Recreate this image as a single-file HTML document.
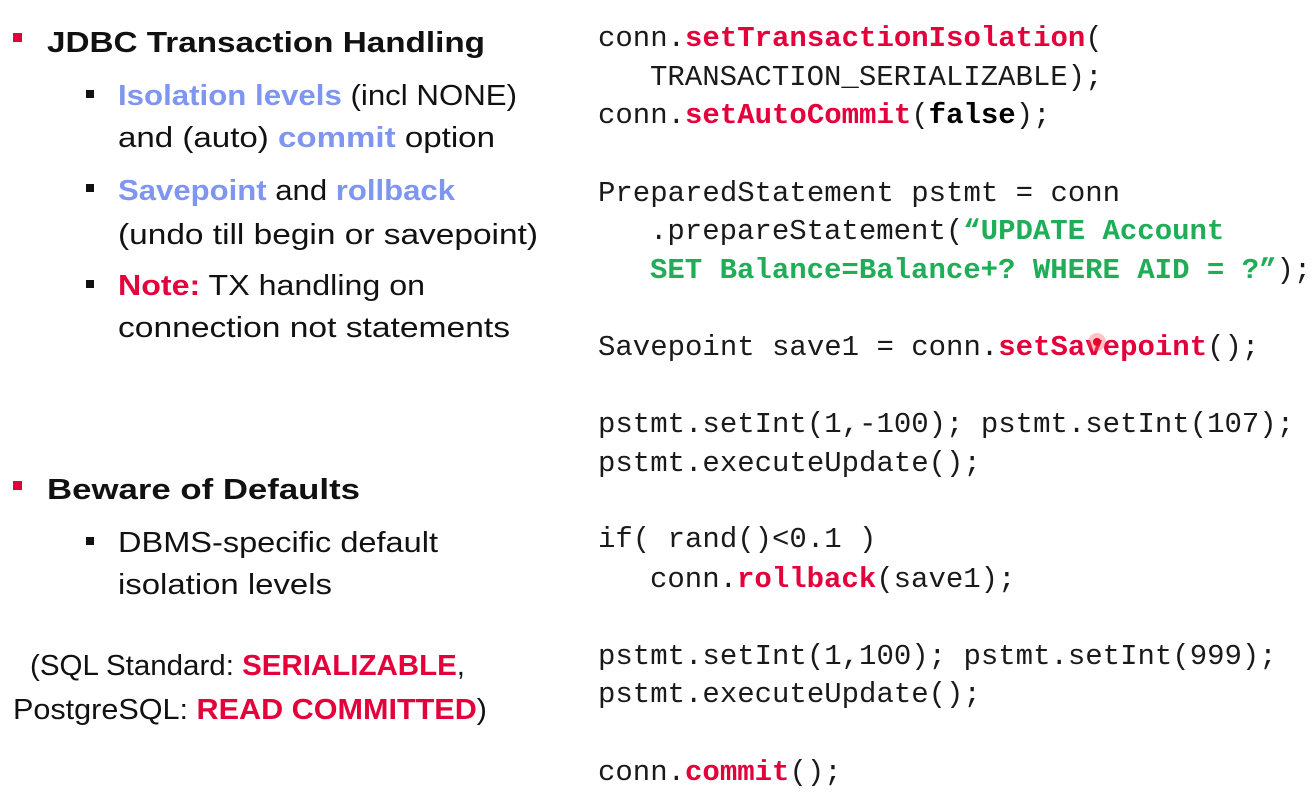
<!DOCTYPE html>
<html><head><meta charset="utf-8"><style>
html,body{margin:0;padding:0;background:#fff;}
svg{display:block;}
.s{font-family:"Liberation Sans",sans-serif;font-size:29px;fill:#111;}
.b{font-weight:bold;}
.bl{fill:#7f96f0;font-weight:bold;}
.r{fill:#e4003b;font-weight:bold;}
.m{font-family:"Liberation Mono",monospace;font-size:29px;fill:#1a1a1a;}
.mr{fill:#e4003b;font-weight:bold;}
.mg{fill:#1fae57;font-weight:bold;}
.mb{font-weight:bold;fill:#000;}
</style></head><body>
<svg width="1312" height="796" viewBox="0 0 1312 796" xmlns="http://www.w3.org/2000/svg">
<rect x="13" y="33" width="9" height="9" fill="#e4003b"/>
<rect x="13" y="481" width="9" height="9" fill="#e4003b"/>
<rect x="86" y="90" width="8" height="8" fill="#111"/>
<rect x="86" y="184" width="8" height="8" fill="#111"/>
<rect x="86" y="280" width="8" height="8" fill="#111"/>
<rect x="86" y="537" width="8" height="8" fill="#111"/>

<text class="s b" x="47" y="52" textLength="438" lengthAdjust="spacingAndGlyphs">JDBC Transaction Handling</text>
<text class="s" x="118" y="105" textLength="399" lengthAdjust="spacingAndGlyphs"><tspan class="bl">Isolation levels</tspan> (incl NONE)</text>
<text class="s" x="118" y="147" textLength="377" lengthAdjust="spacingAndGlyphs">and (auto) <tspan class="bl">commit</tspan> option</text>
<text class="s" x="118" y="200" textLength="337" lengthAdjust="spacingAndGlyphs"><tspan class="bl">Savepoint</tspan> and <tspan class="bl">rollback</tspan></text>
<text class="s" x="118" y="244" textLength="420" lengthAdjust="spacingAndGlyphs">(undo till begin or savepoint)</text>
<text class="s" x="118" y="295" textLength="307" lengthAdjust="spacingAndGlyphs"><tspan class="r">Note:</tspan> TX handling on</text>
<text class="s" x="118" y="337" textLength="392" lengthAdjust="spacingAndGlyphs">connection not statements</text>
<text class="s b" x="47" y="499" textLength="313" lengthAdjust="spacingAndGlyphs">Beware of Defaults</text>
<text class="s" x="118" y="552" textLength="320" lengthAdjust="spacingAndGlyphs">DBMS-specific default</text>
<text class="s" x="118" y="594" textLength="214" lengthAdjust="spacingAndGlyphs">isolation levels</text>
<text class="s" x="30" y="675" textLength="435" lengthAdjust="spacingAndGlyphs">(SQL Standard: <tspan class="r">SERIALIZABLE</tspan>,</text>
<text class="s" x="13" y="719" textLength="474" lengthAdjust="spacingAndGlyphs">PostgreSQL: <tspan class="r">READ COMMITTED</tspan>)</text>

<g class="m">
<text x="598" y="46">conn.<tspan class="mr">setTransactionIsolation</tspan>(</text>
<text x="650" y="85">TRANSACTION_SERIALIZABLE);</text>
<text x="598" y="123">conn.<tspan class="mr">setAutoCommit</tspan>(<tspan class="mb">false</tspan>);</text>
<text x="598" y="201">PreparedStatement pstmt = conn</text>
<text x="650" y="239">.prepareStatement(<tspan class="mg">“UPDATE Account</tspan></text>
<text x="650" y="278"><tspan class="mg">SET Balance=Balance+? WHERE AID = ?”</tspan>);</text>
<text x="598" y="355">Savepoint save1 = conn.<tspan class="mr">setSavepoint</tspan>();</text>
<text x="598" y="432">pstmt.setInt(1,-100); pstmt.setInt(107);</text>
<text x="598" y="471">pstmt.executeUpdate();</text>
<text x="598" y="547">if( rand()&lt;0.1 )</text>
<text x="650" y="587">conn.<tspan class="mr">rollback</tspan>(save1);</text>
<text x="598" y="664">pstmt.setInt(1,100); pstmt.setInt(999);</text>
<text x="598" y="702">pstmt.executeUpdate();</text>
<text x="598" y="780">conn.<tspan class="mr">commit</tspan>();</text>
</g>
<circle cx="1097" cy="342" r="9" fill="#ff5a5a" opacity="0.35"/>
<circle cx="1097" cy="342" r="4" fill="#e8002a"/>
</svg>
</body></html>
